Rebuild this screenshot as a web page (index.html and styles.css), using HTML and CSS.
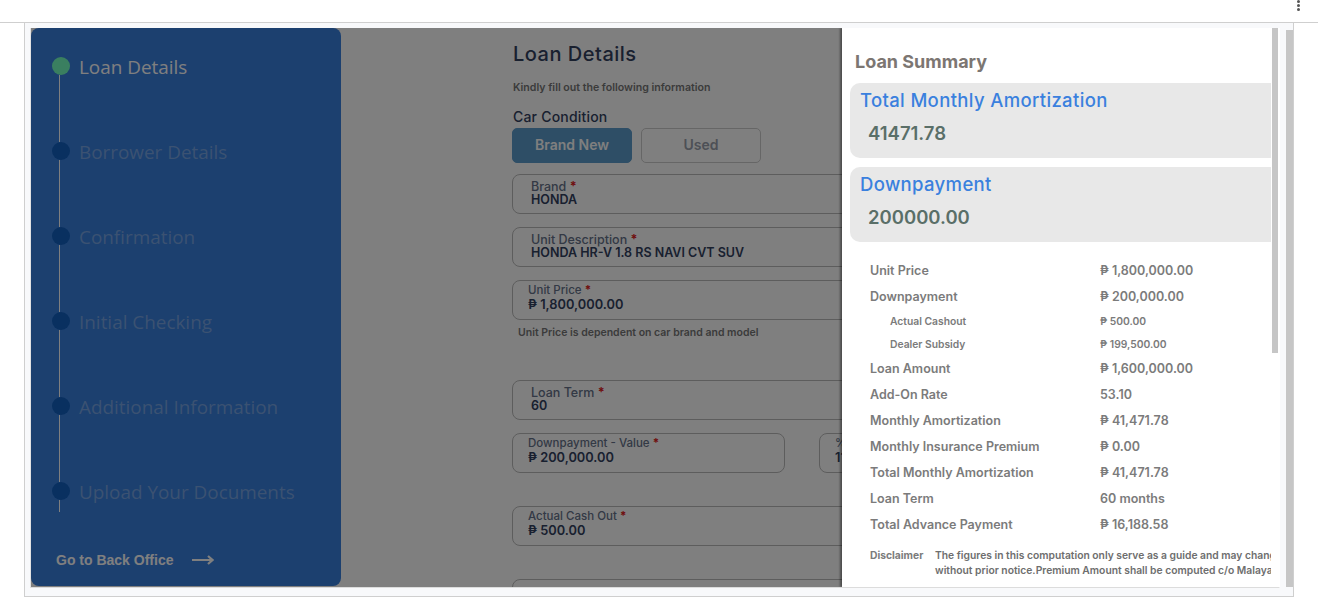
FILE: index.html
```html
<!DOCTYPE html>
<html lang="en">
<head>
	<meta charset="UTF-8">
	<title>Loan Details</title>
	<link rel="stylesheet" href="styles.css">
</head>
<body>
	<div class="topbar">
		<div class="kebab"><span></span><span></span><span></span></div>
	</div>
	<div class="page">
		<div class="frame">
			<div class="sidebar">
				<ul class="steps">
					<li class="step active"><div class="track"><i class="dot"></i><i class="line"></i></div><span>Loan Details</span></li>
					<li class="step"><div class="track"><i class="dot"></i><i class="line"></i></div><span>Borrower Details</span></li>
					<li class="step"><div class="track"><i class="dot"></i><i class="line"></i></div><span>Confirmation</span></li>
					<li class="step"><div class="track"><i class="dot"></i><i class="line"></i></div><span>Initial Checking</span></li>
					<li class="step"><div class="track"><i class="dot"></i><i class="line"></i></div><span>Additional Information</span></li>
					<li class="step last"><div class="track"><i class="dot"></i><i class="line"></i></div><span>Upload Your Documents</span></li>
				</ul>
				<a class="back">Go to Back Office
					<svg width="22" height="10" viewBox="0 0 22 10"><path d="M0 5H20M16 1L20.500 5L16 9" fill="none" stroke="#fff" stroke-width="2.200"/></svg>
				</a>
			</div>
			<div class="main">
				<h1>Loan Details</h1>
				<p class="hint">Kindly fill out the following information</p>
				<h2>Car Condition</h2>
				<div class="choices">
					<div class="choice on">Brand New</div>
					<div class="choice">Used</div>
				</div>
				<div class="field select brand">
					<label>Brand <b>*</b></label>
					<div>HONDA</div>
				</div>
				<div class="field select">
					<label>Unit Description <b>*</b></label>
					<div>HONDA HR-V 1.8 RS NAVI CVT SUV</div>
				</div>
				<div class="field">
					<label>Unit Price <b>*</b></label>
					<div>₱ 1,800,000.00</div>
				</div>
				<p class="note">Unit Price is dependent on car brand and model</p>
				<div class="field select term">
					<label>Loan Term <b>*</b></label>
					<div>60</div>
				</div>
				<div class="pair">
					<div class="field down">
						<label>Downpayment - Value <b>*</b></label>
						<div>₱ 200,000.00</div>
					</div>
					<div class="field pct">
						<label>%</label>
						<div>11</div>
					</div>
				</div>
				<div class="field cash">
					<label>Actual Cash Out <b>*</b></label>
					<div>₱ 500.00</div>
				</div>
				<div class="field cash"></div>
			</div>
			<div class="overlay"></div>
			<div class="drawer">
				<div class="drawer-body">
					<h3>Loan Summary</h3>
					<div class="card">
						<h4>Total Monthly Amortization</h4>
						<div class="amount">41471.78</div>
					</div>
					<div class="card">
						<h4>Downpayment</h4>
						<div class="amount">200000.00</div>
					</div>
					<dl class="rows">
						<div class="row"><dt>Unit Price</dt><dd>₱ 1,800,000.00</dd></div>
						<div class="row"><dt>Downpayment</dt><dd>₱ 200,000.00</dd></div>
						<div class="row sub"><dt>Actual Cashout</dt><dd>₱ 500.00</dd></div>
						<div class="row sub"><dt>Dealer Subsidy</dt><dd>₱ 199,500.00</dd></div>
						<div class="row"><dt>Loan Amount</dt><dd>₱ 1,600,000.00</dd></div>
						<div class="row"><dt>Add-On Rate</dt><dd>53.10</dd></div>
						<div class="row"><dt>Monthly Amortization</dt><dd>₱ 41,471.78</dd></div>
						<div class="row"><dt>Monthly Insurance Premium</dt><dd>₱ 0.00</dd></div>
						<div class="row"><dt>Total Monthly Amortization</dt><dd>₱ 41,471.78</dd></div>
						<div class="row"><dt>Loan Term</dt><dd>60 months</dd></div>
						<div class="row"><dt>Total Advance Payment</dt><dd>₱ 16,188.58</dd></div>
					</dl>
					<div class="disclaimer">
						<strong>Disclaimer</strong>
						<p>The figures in this computation only serve as a guide and may change<br>without prior notice.Premium Amount shall be computed c/o Malayan Insurance</p>
					</div>
				</div>
				<div class="scroll"><div class="thumb"></div></div>
			</div>
		</div>
		<div class="outer-scroll"></div>
	</div>
</body>
</html>
```

FILE: styles.css
```css
*{
	margin: 0;
	padding: 0;
	box-sizing: border-box;
}
ul{
	list-style: none;
}
html, body{
	height: 609px;
	overflow: hidden;
	background: #fff;
	font-family: Inter, "Noto Sans", sans-serif;
}
.topbar{
	height: 23px;
	border-bottom: 1px solid #cfcfcf;
	display: flex;
	justify-content: flex-end;
	padding: 0 18px 0 0;
}
.kebab{
	width: 3px;
	display: flex;
	flex-direction: column;
	gap: 1px;
}
.kebab span{
	width: 3px;
	height: 3px;
	background: #555;
	border-radius: 50%;
}
.page{
	width: 1270px;
	height: 574px;
	margin-left: 24px;
	border-left: 1px solid #cfcfcf;
	border-right: 1px solid #cfcfcf;
	border-bottom: 1px solid #cfcfcf;
	background: #f8f9fb;
	padding: 5px 0 0 5px;
	display: flex;
}
.frame{
	width: 1250px;
	height: 560px;
	border-left: 1px solid #e2e2e2;
	border-right: 1px solid #fff;
	border-bottom: 1px solid #dcdcdc;
	background: #fff;
	position: relative;
	overflow: hidden;
	display: flex;
}
.outer-scroll{
	width: 7px;
	height: 557px;
	margin: 2px 0 0 6px;
	background: #c6c6c6;
}

/* left steps */
.sidebar{
	width: 310px;
	height: 558px;
	flex-shrink: 0;
	background: #3880df;
	border-radius: 8px;
	padding: 29px 0 0 21px;
	display: flex;
	flex-direction: column;
}
.steps{
	flex: 1;
}
.step{
	height: 85px;
	display: flex;
	gap: 9px;
	color: #76a4e4;
	font-family: "Open Sans", sans-serif;
	font-size: 18.900px;
	line-height: 20px;
}
.step.active{
	color: #fff;
}
.step.last{
	height: 30px;
}
.track{
	width: 18px;
	height: 100%;
	display: flex;
	flex-direction: column;
}
.dot{
	width: 18px;
	height: 18px;
	border-radius: 50%;
	background: #1260c0;
	flex-shrink: 0;
}
.active .dot{
	background: #74ffc0;
}
.line{
	flex: 1;
	width: 1px;
	margin-left: 7px;
	background: #fff;
}
.back{
	display: flex;
	align-items: center;
	gap: 19px;
	padding: 0 0 18px 4px;
	color: #fff;
	font-family: "Liberation Sans", sans-serif;
	font-size: 14px;
	font-weight: 700;
	line-height: 16px;
}

/* form */
.main{
	width: 600px;
	margin-left: 171px;
	flex-shrink: 0;
	color: #3d4a66;
}
h1{
	font-size: 20px;
	font-weight: 500;
	line-height: 24px;
	letter-spacing: .5px;
	color: #33415f;
	margin: 14px 0 0 1px;
}
.hint{
	font-size: 10.600px;
	font-weight: 600;
	line-height: 14px;
	color: #777;
	margin: 15px 0 0 1px;
}
h2{
	font-size: 14px;
	font-weight: 500;
	line-height: 18px;
	letter-spacing: .2px;
	color: #33415f;
	margin: 13px 0 0 1px;
}
.choices{
	display: flex;
	gap: 9px;
	margin-top: 2px;
}
.choice{
	width: 120px;
	height: 35px;
	border: 1px solid #ccc;
	border-radius: 5px;
	text-align: center;
	font-size: 14px;
	font-weight: 600;
	line-height: 31px;
	color: #9aa0ac;
}
.choice.on{
	background: #5c9ccc;
	border-color: #5c9ccc;
	color: #fff;
}
.field{
	height: 40px;
	border: 1px solid #bbb;
	border-radius: 8px;
	padding: 0 0 0 15px;
	margin-top: 13px;
	font-size: 12.800px;
	font-weight: 600;
	line-height: 14px;
	color: #33415f;
}
.field label{
	display: block;
	font-size: 11.500px;
	font-weight: 500;
	line-height: 14px;
	padding-top: 2px;
	color: #66728a;
}
.field label + div{
	padding-top: 0;
	line-height: 15px;
}
.field b{
	color: #e02020;
}
.select{
	padding-left: 18px;
}
.select label{
	padding-top: 5px;
	line-height: 13px;
	font-size: 12.500px;
}
.select label + div{
	padding-top: 0;
	line-height: 14px;
	font-size: 12.500px;
}
.brand{
	margin-top: 11px;
}
.note{
	font-size: 10.500px;
	font-weight: 600;
	line-height: 14px;
	color: #777;
	margin: 6px 0 0 6px;
}
.term{
	margin-top: 40px;
}
.pair{
	display: flex;
	gap: 34px;
}
.down{
	width: 273px;
}
.pct{
	width: 200px;
}
.cash{
	margin-top: 33px;
}

/* dim layer */
.overlay{
	position: absolute;
	left: 0;
	top: 0;
	right: 0;
	bottom: 0;
	background: rgba(0, 0, 0, .5);
}

/* summary */
.drawer{
	position: absolute;
	top: 0;
	right: 0;
	bottom: 0;
	width: 437px;
	background: #fff;
	box-shadow: -2px 0 2px rgba(0, 0, 0, .4);
	display: flex;
}
.drawer-body{
	width: 429px;
	overflow: hidden;
	padding: 0 0 0 8px;
}
.scroll{
	width: 8px;
	padding-left: 1px;
}
.thumb{
	width: 6px;
	height: 325px;
	background: #c6c6c6;
}
h3{
	font-size: 18px;
	font-weight: 700;
	line-height: 22px;
	color: #7c7672;
	padding: 23px 0 0 5px;
	height: 55px;
}
.card{
	width: 450px;
	height: 75px;
	margin-bottom: 9px;
	padding: 6px 0 0 10px;
	background: #e8e8e8;
	border-radius: 10px;
}
.card h4{
	font-size: 18.500px;
	font-weight: 500;
	line-height: 22px;
	letter-spacing: .35px;
	color: #3a80de;
}
.amount{
	font-size: 18.500px;
	font-weight: 600;
	line-height: 24px;
	color: #5a6f68;
	padding: 10px 0 0 8px;
}
.rows{
	padding: 6px 0 0 20px;
}
.row{
	display: flex;
	height: 26px;
	align-items: center;
	font-size: 12.500px;
	font-weight: 600;
	color: #7b7b7b;
}
.row dt{
	width: 230px;
}
.row.sub{
	height: 23px;
	padding-left: 20px;
	font-size: 10.300px;
}
.row.sub dt{
	width: 210px;
}
.disclaimer{
	display: flex;
	padding: 11px 0 0 20px;
	width: 600px;
	font-size: 10.300px;
	font-weight: 600;
	line-height: 15px;
	color: #6e6e6e;
}
.disclaimer strong{
	width: 65px;
	flex-shrink: 0;
	font-weight: 700;
	color: #7b7b7b;
}
.disclaimer p{
	white-space: nowrap;
}
```
